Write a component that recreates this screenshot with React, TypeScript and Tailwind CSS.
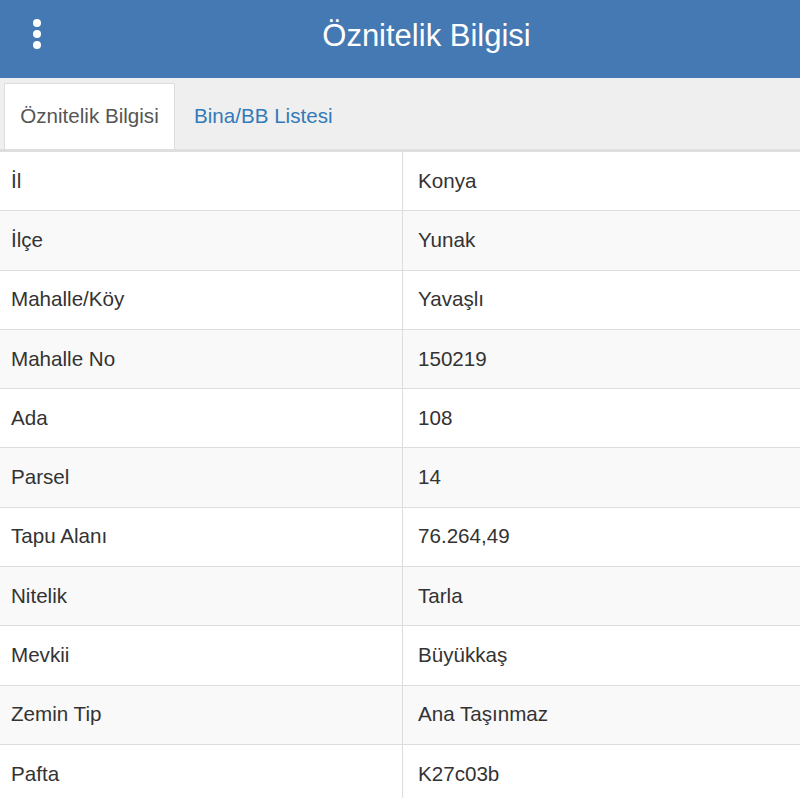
import React from "react";

const rows: [string, string][] = [
  ["İl", "Konya"],
  ["İlçe", "Yunak"],
  ["Mahalle/Köy", "Yavaşlı"],
  ["Mahalle No", "150219"],
  ["Ada", "108"],
  ["Parsel", "14"],
  ["Tapu Alanı", "76.264,49"],
  ["Nitelik", "Tarla"],
  ["Mevkii", "Büyükkaş"],
  ["Zemin Tip", "Ana Taşınmaz"],
  ["Pafta", "K27c03b"],
];

export default function App() {
  return (
    <div
      className="w-[800px] h-[798px] overflow-hidden bg-white"
      style={{ fontFamily: '"Liberation Sans", Arial, sans-serif' }}
    >
      <header className="h-[78px] bg-[#4479b3] flex items-center">
        <div className="w-[53px] h-full flex items-center">
          <div className="flex flex-col items-center gap-[3.5px] ml-[33px] mb-[10px]">
            <span className="block w-[7.5px] h-[7.5px] rounded-full bg-white" />
            <span className="block w-[7.5px] h-[7.5px] rounded-full bg-white" />
            <span className="block w-[7.5px] h-[7.5px] rounded-full bg-white" />
          </div>
        </div>
        <h1 className="flex-1 text-center text-white text-[31px] leading-none pb-[8px]">
          Öznitelik Bilgisi
        </h1>
      </header>
      <nav className="h-[74px] bg-[#efefef] border-b-[3px] border-[#dedede] flex items-end pl-[4px]">
        <div className="h-[66px] w-[171px] bg-white border border-b-0 border-[#dddddd] flex items-center justify-center text-[#555] text-[20.6px]">
          Öznitelik Bilgisi
        </div>
        <div className="h-[66px] px-[19px] flex items-center text-[#337ab7] text-[20.6px]">
          Bina/BB Listesi
        </div>
      </nav>
      <div className="flex flex-col">
        {rows.map(([k, v], i) => (
          <div
            key={k}
            className={`grid grid-cols-[403px_1fr] h-[59.3px] border-b-[1.5px] border-[#dddddd] text-[20.6px] text-[#333] ${
              i % 2 === 1 ? "bg-[#f9f9f9]" : "bg-white"
            }`}
          >
            <div className="flex items-center pl-[11px] border-r-[1.5px] border-[#dddddd]">{k}</div>
            <div className="flex items-center pl-[15px]">{v}</div>
          </div>
        ))}
      </div>
    </div>
  );
}
